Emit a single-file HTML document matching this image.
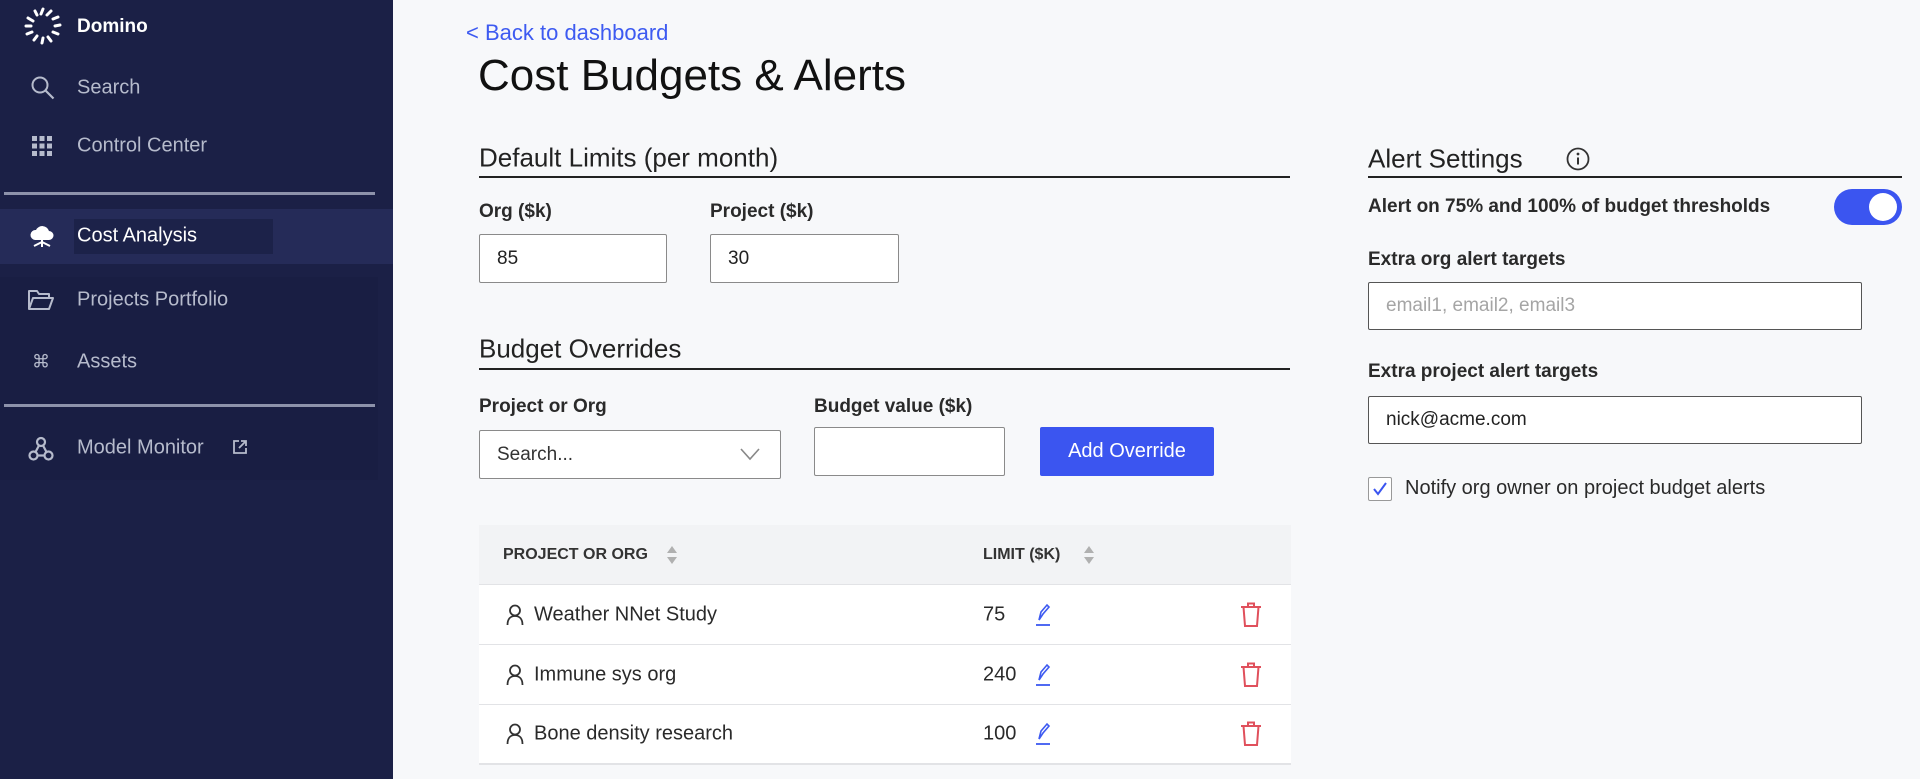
<!DOCTYPE html>
<html><head><style>
*{box-sizing:border-box;margin:0;padding:0}
body{width:1920px;height:779px;overflow:hidden;background:#f7f8fa;font-family:"Liberation Sans",Arial,sans-serif;position:relative;color:#222}
.a{position:absolute}
#sb{left:0;top:0;width:393px;height:779px;background:#1b2046}
.nav{position:absolute;left:77px;font-size:20px;color:#b6bbcc;transform:translateY(-50%);white-space:nowrap}
.ic{position:absolute;transform:translateY(-50%)}
.div{position:absolute;left:4px;width:371px;height:3px;background:#8d92aa}
.lbl{position:absolute;font-size:19px;font-weight:bold;color:#2a2a2a;transform:translateY(-50%);white-space:nowrap}
.h2{position:absolute;font-size:26px;color:#222;transform:translateY(-50%);white-space:nowrap}
.line{position:absolute;height:2px;background:#222}
.inp{position:absolute;background:#fff;border:1.5px solid #8a8a8a;border-radius:2px;font-size:19px;padding-left:17px;display:flex;align-items:center}
.row{position:absolute;left:479px;width:812px;background:#fff;border-bottom:1.5px solid #e2e3e6}
.cell{position:absolute;top:50%;transform:translateY(-50%);font-size:20px;color:#2a2a2a;white-space:nowrap}
</style></head><body>
<div id="sb" class="a"></div>
<div class="a" style="left:0;top:277px;width:378px;height:203px;background:#191e43"></div>
<svg class="a" style="left:22px;top:6px" width="42" height="40" viewBox="0 0 42 40">
<g stroke="#fff" stroke-width="3" stroke-linecap="round" fill="none">
<path d="M21 3l-2 5"/><path d="M29 5l-4 4"/><path d="M36 11l-5 2"/><path d="M38 19l-5 1"/><path d="M36 28l-5-2"/><path d="M29 35l-3-4"/><path d="M20 37l1-5"/><path d="M12 34l3-4"/><path d="M5 28l5-2"/><path d="M4 20h5"/><path d="M6 12l5 3"/><path d="M13 5l2 4"/>
</g></svg>
<div class="nav" style="top:27px;color:#fff;font-weight:bold;font-size:19px">Domino</div>
<svg class="ic" style="left:30px;top:88px" width="26" height="26" viewBox="0 0 26 26"><circle cx="10" cy="10" r="7.5" stroke="#b6bbcc" stroke-width="2" fill="none"/><path d="M15.5 15.5l8 8" stroke="#b6bbcc" stroke-width="2.2"/></svg>
<div class="nav" style="top:88px">Search</div>
<svg class="ic" style="left:31px;top:146px" width="22" height="22" viewBox="0 0 22 22" fill="#b6bbcc"><rect x="1" y="1" width="5" height="5"/><rect x="8.5" y="1" width="5" height="5"/><rect x="16" y="1" width="5" height="5"/><rect x="1" y="8.5" width="5" height="5"/><rect x="8.5" y="8.5" width="5" height="5"/><rect x="16" y="8.5" width="5" height="5"/><rect x="1" y="16" width="5" height="5"/><rect x="8.5" y="16" width="5" height="5"/><rect x="16" y="16" width="5" height="5"/></svg>
<div class="nav" style="top:146px">Control Center</div>
<div class="div" style="top:192px"></div>
<div class="a" style="left:0;top:209px;width:393px;height:55px;background:#252b58"></div>
<div class="a" style="left:74px;top:219px;width:199px;height:35px;background:#1c2249"></div>
<svg class="ic" style="left:28px;top:237px" width="28" height="28" viewBox="0 0 28 28"><path d="M7 17a5 5 0 0 1 1-10 7 7 0 0 1 13 1 4.5 4.5 0 0 1 0 9z" fill="#fff"/><path d="M14 17v7M14 19l-8 4M14 19l8 4" stroke="#fff" stroke-width="2" fill="none"/></svg>
<div class="nav" style="top:236px;color:#fff">Cost Analysis</div>
<svg class="ic" style="left:28px;top:300px" width="26" height="22" viewBox="0 0 26 22"><path d="M1 20V2h8l2 3h10v4M1 20l4-11h20l-4 11z" stroke="#b6bbcc" stroke-width="2" fill="none" stroke-linejoin="round"/></svg>
<div class="nav" style="top:300px">Projects Portfolio</div>
<div class="nav" style="top:362px;left:32px;font-size:18px">⌘</div>
<div class="nav" style="top:362px">Assets</div>
<div class="div" style="top:404px"></div>
<svg class="ic" style="left:28px;top:449px" width="26" height="26" viewBox="0 0 26 26"><g stroke="#b6bbcc" stroke-width="2.2" fill="none"><circle cx="13" cy="6" r="4"/><circle cx="5.5" cy="19.5" r="4"/><circle cx="20.5" cy="19.5" r="4"/><path d="M11 9.5l-3.5 6.5M15 9.5l3.5 6.5M9.5 19.5h7"/></g></svg>
<div class="nav" style="top:448px">Model Monitor</div>
<svg class="ic" style="left:232px;top:447px" width="16" height="16" viewBox="0 0 16 16"><path d="M7 2H2v12h12V9M9 2h5v5M14 2L7 9" stroke="#b6bbcc" stroke-width="1.8" fill="none"/></svg>

<div class="a" style="left:466px;top:20px;font-size:22px;color:#3d5af1">&lt; Back to dashboard</div>
<div class="a" style="left:478px;top:51px;font-size:44px;color:#111">Cost Budgets &amp; Alerts</div>

<div class="h2" style="left:479px;top:158px">Default Limits (per month)</div>
<div class="line" style="left:479px;top:176px;width:811px"></div>
<div class="lbl" style="left:479px;top:212px">Org ($k)</div>
<div class="lbl" style="left:710px;top:212px">Project ($k)</div>
<div class="inp" style="left:479px;top:234px;width:188px;height:49px">85</div>
<div class="inp" style="left:710px;top:234px;width:189px;height:49px">30</div>

<div class="h2" style="left:479px;top:349px">Budget Overrides</div>
<div class="line" style="left:479px;top:368px;width:811px"></div>
<div class="lbl" style="left:479px;top:407px">Project or Org</div>
<div class="lbl" style="left:814px;top:407px">Budget value ($k)</div>
<div class="inp" style="left:479px;top:430px;width:302px;height:49px;color:#333">Search...</div>
<svg class="a" style="left:740px;top:447px" width="20" height="14" viewBox="0 0 20 14"><path d="M1 2l9 10 9-10" stroke="#888" stroke-width="1.6" fill="none"/></svg>
<div class="inp" style="left:814px;top:427px;width:191px;height:49px"></div>
<div class="a" style="left:1040px;top:427px;width:174px;height:49px;background:#3b55f0;border-radius:2px;color:#fff;font-size:20px;display:flex;align-items:center;justify-content:center">Add Override</div>

<div class="a" style="left:479px;top:525px;width:812px;height:240px;border:1.5px solid #e2e3e6"></div>
<div class="row" style="top:525px;height:60px;background:#f2f3f5">
 <svg class="cell" style="left:187px" width="12" height="20" viewBox="0 0 12 20"><path d="M6 1l5 7H1z M6 19l5-7H1z" fill="#b0b0b0"/></svg>
 <div class="cell" style="left:24px;font-size:16px;font-weight:bold;color:#333">PROJECT OR ORG</div>
 <div class="cell" style="left:504px;font-size:16px;font-weight:bold;color:#333">LIMIT ($K)</div>
 <svg class="cell" style="left:604px" width="12" height="20" viewBox="0 0 12 20"><path d="M6 1l5 7H1z M6 19l5-7H1z" fill="#b0b0b0"/></svg>
</div>
<div class="row" style="top:585px;height:60px">
 <svg class="cell" style="left:27px" width="18" height="22" viewBox="0 0 18 22"><circle cx="9" cy="6.5" r="5" stroke="#333" stroke-width="1.8" fill="none"/><path d="M1.5 21c0-6 3-9 7.5-9s7.5 3 7.5 9" stroke="#333" stroke-width="1.8" fill="none"/></svg>
 <div class="cell" style="left:55px">Weather NNet Study</div>
 <div class="cell" style="left:504px">75</div>
 <svg class="cell" style="left:555px" width="18" height="24" viewBox="0 0 18 24"><path d="M5 17l2-8 6-7 2 2-6 7z" stroke="#3d5af1" stroke-width="1.6" fill="none"/><path d="M2 22h14" stroke="#3d5af1" stroke-width="1.8"/></svg>
 <svg class="cell" style="left:761px" width="22" height="26" viewBox="0 0 22 26"><path d="M1 5h20M8 5V1.5h6V5M3.5 5l1.5 19h12l1.5-19" stroke="#e0505c" stroke-width="2" fill="none"/></svg>
</div>
<div class="row" style="top:645px;height:60px">
 <svg class="cell" style="left:27px" width="18" height="22" viewBox="0 0 18 22"><circle cx="9" cy="6.5" r="5" stroke="#333" stroke-width="1.8" fill="none"/><path d="M1.5 21c0-6 3-9 7.5-9s7.5 3 7.5 9" stroke="#333" stroke-width="1.8" fill="none"/></svg>
 <div class="cell" style="left:55px">Immune sys org</div>
 <div class="cell" style="left:504px">240</div>
 <svg class="cell" style="left:555px" width="18" height="24" viewBox="0 0 18 24"><path d="M5 17l2-8 6-7 2 2-6 7z" stroke="#3d5af1" stroke-width="1.6" fill="none"/><path d="M2 22h14" stroke="#3d5af1" stroke-width="1.8"/></svg>
 <svg class="cell" style="left:761px" width="22" height="26" viewBox="0 0 22 26"><path d="M1 5h20M8 5V1.5h6V5M3.5 5l1.5 19h12l1.5-19" stroke="#e0505c" stroke-width="2" fill="none"/></svg>
</div>
<div class="row" style="top:705px;height:59px">
 <svg class="cell" style="left:27px" width="18" height="22" viewBox="0 0 18 22"><circle cx="9" cy="6.5" r="5" stroke="#333" stroke-width="1.8" fill="none"/><path d="M1.5 21c0-6 3-9 7.5-9s7.5 3 7.5 9" stroke="#333" stroke-width="1.8" fill="none"/></svg>
 <div class="cell" style="left:55px">Bone density research</div>
 <div class="cell" style="left:504px">100</div>
 <svg class="cell" style="left:555px" width="18" height="24" viewBox="0 0 18 24"><path d="M5 17l2-8 6-7 2 2-6 7z" stroke="#3d5af1" stroke-width="1.6" fill="none"/><path d="M2 22h14" stroke="#3d5af1" stroke-width="1.8"/></svg>
 <svg class="cell" style="left:761px" width="22" height="26" viewBox="0 0 22 26"><path d="M1 5h20M8 5V1.5h6V5M3.5 5l1.5 19h12l1.5-19" stroke="#e0505c" stroke-width="2" fill="none"/></svg>
</div>

<div class="h2" style="left:1368px;top:159px">Alert Settings</div>
<svg class="a" style="left:1566px;top:147px" width="24" height="24" viewBox="0 0 24 24"><circle cx="12" cy="12" r="10.5" stroke="#333" stroke-width="1.8" fill="none"/><circle cx="12" cy="7" r="1.4" fill="#333"/><path d="M12 10.5v7" stroke="#333" stroke-width="2"/></svg>
<div class="line" style="left:1368px;top:176px;width:534px"></div>
<div class="lbl" style="left:1368px;top:207px">Alert on 75% and 100% of budget thresholds</div>
<div class="a" style="left:1834px;top:189px;width:68px;height:36px;border-radius:18px;background:#3b55f0"></div>
<div class="a" style="left:1869px;top:193px;width:28px;height:28px;border-radius:50%;background:#fff"></div>
<div class="lbl" style="left:1368px;top:260px">Extra org alert targets</div>
<div class="inp" style="left:1368px;top:282px;width:494px;height:48px;color:#a5a5a5;border-color:#555">email1, email2, email3</div>
<div class="lbl" style="left:1368px;top:372px">Extra project alert targets</div>
<div class="inp" style="left:1368px;top:396px;width:494px;height:48px;color:#222;border-color:#555">nick@acme.com</div>
<div class="a" style="left:1368px;top:477px;width:24px;height:24px;border:1.5px solid #999;border-radius:2px;background:#fff"></div>
<svg class="a" style="left:1372px;top:481px" width="16" height="16" viewBox="0 0 16 16"><path d="M2 8l4 5 8-11" stroke="#3b55f0" stroke-width="2" fill="none"/></svg>
<div class="a" style="left:1405px;top:477px;font-size:20px;color:#2a2a2a">Notify org owner on project budget alerts</div>
</body></html>
